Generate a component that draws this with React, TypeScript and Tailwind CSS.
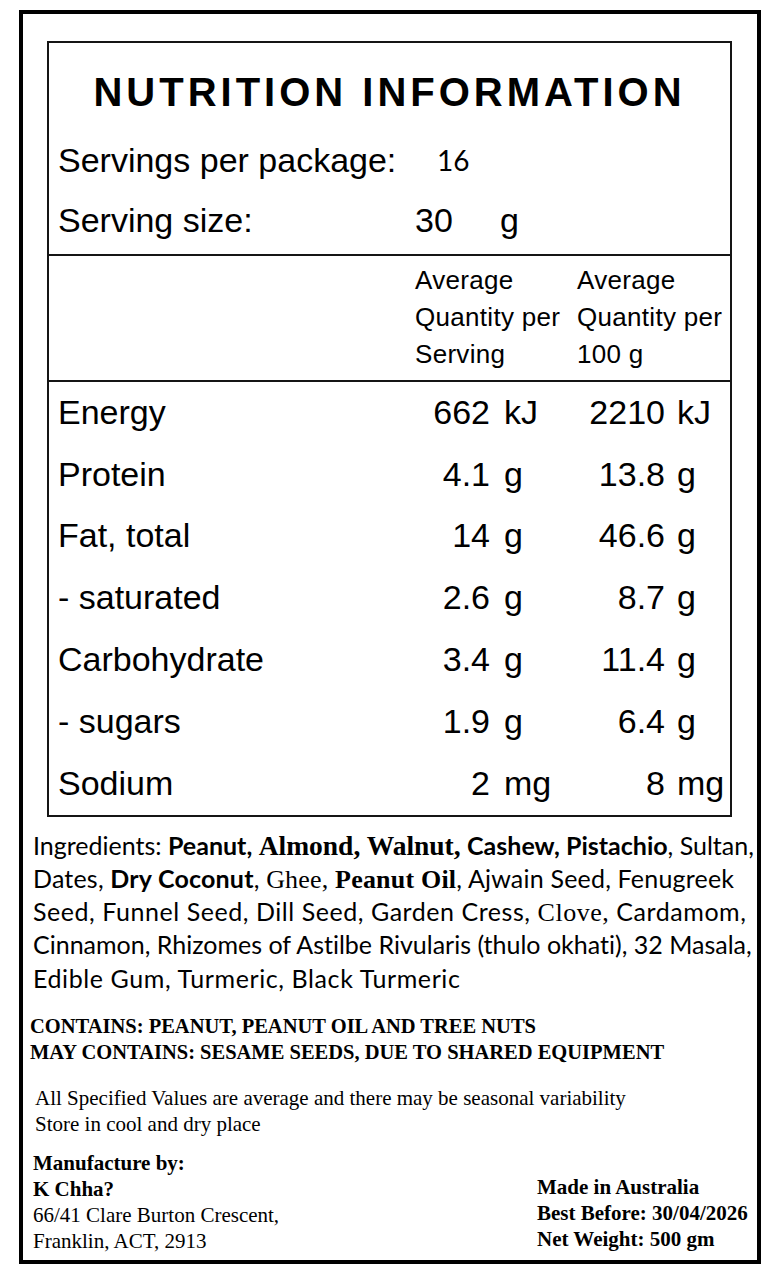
import React from "react";

const rows: { label: string; n1: string; u1: string; n2: string; u2: string }[] = [
  { label: "Energy", n1: "662", u1: "kJ", n2: "2210", u2: "kJ" },
  { label: "Protein", n1: "4.1", u1: "g", n2: "13.8", u2: "g" },
  { label: "Fat, total", n1: "14", u1: "g", n2: "46.6", u2: "g" },
  { label: "- saturated", n1: "2.6", u1: "g", n2: "8.7", u2: "g" },
  { label: "Carbohydrate", n1: "3.4", u1: "g", n2: "11.4", u2: "g" },
  { label: "- sugars", n1: "1.9", u1: "g", n2: "6.4", u2: "g" },
  { label: "Sodium", n1: "2", u1: "mg", n2: "8", u2: "mg" },
];

const serif = "font-['Liberation_Serif',serif]";

export default function App() {
  return (
    <div className="w-[775px] h-[1273px] bg-white pt-[10px] pl-[19px] text-black">
      <div className="w-[742px] h-[1254px] border-4 border-black flex flex-col">
        {/* Nutrition table */}
        <div className="ml-[24px] mt-[27px] w-[685px] border-2 border-[#151515] font-['Liberation_Sans',Arial,sans-serif]">
          <div className="h-[211px] flex flex-col">
            <div className="mt-[29px] h-[40px] leading-[40px] text-center text-[40px] font-bold tracking-[0.1em]">
              NUTRITION INFORMATION
            </div>
            <div className="mt-[18px] h-[60px] flex items-center pl-[9px] text-[34px]">
              <span className="w-[379px]">Servings per package:</span>
              <span className="text-[28px] font-['Lato',sans-serif]">16</span>
            </div>
            <div className="h-[60px] flex items-center pl-[9px] text-[34px]">
              <span className="w-[357px]">Serving size:</span>
              <span className="w-[85px]">30</span>
              <span>g</span>
            </div>
          </div>
          <div className="h-[128px] border-y-2 border-[#151515] flex pt-[6px] text-[26px] leading-[37px] tracking-[0.3px]">
            <div className="w-[366px]" />
            <div className="w-[162px]">
              Average
              <br />
              Quantity per
              <br />
              Serving
            </div>
            <div>
              Average
              <br />
              Quantity per
              <br />
              100 g
            </div>
          </div>
          <div className="flex flex-col">
            {rows.map((r) => (
              <div key={r.label} className="h-[61.8px] flex items-center pl-[9px] text-[34px] pb-[1px]">
                <span className="w-[352px]">{r.label}</span>
                <span className="w-[80px] text-right">{r.n1}</span>
                <span className="w-[95px] pl-[14px]">{r.u1}</span>
                <span className="w-[80px] text-right">{r.n2}</span>
                <span className="pl-[12px]">{r.u2}</span>
              </div>
            ))}
          </div>
        </div>

        {/* Ingredients */}
        <div className="mt-[12px] pl-[10px] text-[25px] leading-[33px] font-['Lato',sans-serif] whitespace-nowrap [font-variant-ligatures:none]">
          <div className="h-[33.25px] tracking-[0px]">
            Ingredients: <b>Peanut,</b> <b className={`${serif} text-[27.5px]`}>Almond, Walnut,</b> <b>Cashew, Pistachio</b>, Sultan,
          </div>
          <div className="h-[33.25px] tracking-[0.2px]">
            Dates, <b>Dry Coconut</b>, <span className={`${serif} text-[26px]`}>Ghee,</span> <b className={`${serif} text-[26px]`}>Peanut Oil</b>, Ajwain Seed, Fenugreek
          </div>
          <div className="h-[33.25px] tracking-[0.55px]">
            Seed, Funnel Seed, Dill Seed, Garden Cress, <span className={`${serif} text-[26px]`}>Clove,</span> Cardamom,
          </div>
          <div className="h-[33.25px]">Cinnamon, Rhizomes of Astilbe Rivularis (thulo okhati), 32 Masala,</div>
          <div className="h-[33.25px] tracking-[0.6px]">Edible Gum, Turmeric, Black Turmeric</div>
        </div>

        {/* Allergens */}
        <div className={`mt-[18px] pl-[7px] text-[20.5px] leading-[26px] font-bold ${serif} whitespace-nowrap`}>
          <div>CONTAINS: PEANUT, PEANUT OIL AND TREE NUTS</div>
          <div>MAY CONTAINS: SESAME SEEDS, DUE TO SHARED EQUIPMENT</div>
        </div>

        <div className={`mt-[20px] pl-[12px] text-[21px] leading-[26px] ${serif} whitespace-nowrap`}>
          <div>All Specified Values are average and there may be seasonal variability</div>
          <div>Store in cool and dry place</div>
        </div>

        <div className={`mt-[13px] pl-[10px] flex items-end text-[21px] leading-[26px] ${serif} whitespace-nowrap`}>
          <div className="w-[504px]">
            <div className="font-bold">Manufacture by:</div>
            <div className="font-bold">K Chha?</div>
            <div>66/41 Clare Burton Crescent,</div>
            <div>Franklin, ACT, 2913</div>
          </div>
          <div className="font-bold pb-[2px]">
            <div>Made in Australia</div>
            <div>Best Before: 30/04/2026</div>
            <div>Net Weight: 500 gm</div>
          </div>
        </div>
      </div>
    </div>
  );
}
